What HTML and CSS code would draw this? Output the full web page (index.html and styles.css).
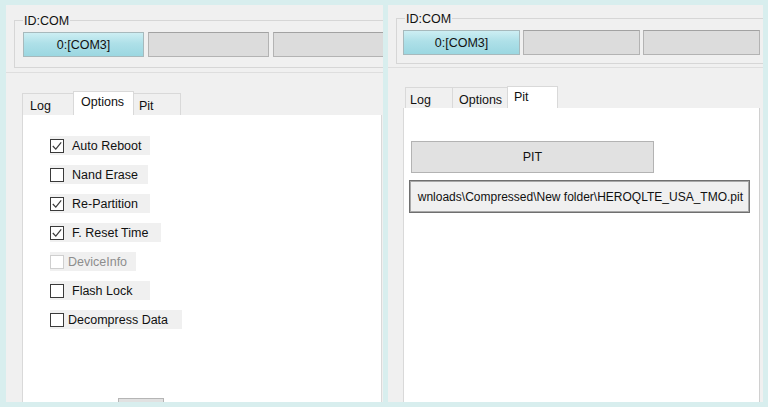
FILE: index.html
```html
<!DOCTYPE html>
<html lang="en">
<head>
<meta charset="utf-8">
<title>Odin</title>
<link rel="stylesheet" href="styles.css">
</head>
<body>
<div class="screen">
  <section class="panel panel-left">
    <div class="top">
      <fieldset class="idcom">
        <legend>ID:COM</legend>
        <div class="slots">
          <div class="slot active">0:[COM3]</div>
          <div class="slot"></div>
          <div class="slot"></div>
        </div>
      </fieldset>
    </div>
    <div class="tabs">
      <div class="tab tab-log">Log</div>
      <div class="tab tab-options selected">Options</div>
      <div class="tab tab-pit">Pit</div>
    </div>
    <div class="tab-body options-body">
      <div class="opt-list">
        <div class="opt w-auto"><span class="cb"><svg viewBox="0 0 12 12"><polyline points="1.8,6 4.8,9.2 10.2,2.4"/></svg></span><span class="opt-text">Auto Reboot</span></div>
        <div class="opt w-nand"><span class="cb"></span><span class="opt-text">Nand Erase</span></div>
        <div class="opt w-repart"><span class="cb"><svg viewBox="0 0 12 12"><polyline points="1.8,6 4.8,9.2 10.2,2.4"/></svg></span><span class="opt-text">Re-Partition</span></div>
        <div class="opt w-reset"><span class="cb"><svg viewBox="0 0 12 12"><polyline points="1.8,6 4.8,9.2 10.2,2.4"/></svg></span><span class="opt-text">F. Reset Time</span></div>
        <div class="opt w-dev disabled"><span class="cb"></span><span class="opt-text tight">DeviceInfo</span></div>
        <div class="opt w-flash"><span class="cb"></span><span class="opt-text">Flash Lock</span></div>
        <div class="opt w-decomp"><span class="cb"></span><span class="opt-text tight">Decompress Data</span></div>
      </div>
      <div class="stub-btn"></div>
    </div>
  </section>

  <section class="panel panel-right">
    <div class="top">
      <fieldset class="idcom">
        <legend>ID:COM</legend>
        <div class="slots">
          <div class="slot active">0:[COM3]</div>
          <div class="slot"></div>
          <div class="slot"></div>
        </div>
      </fieldset>
    </div>
    <div class="tabs">
      <div class="tab tab-log">Log</div>
      <div class="tab tab-options">Options</div>
      <div class="tab tab-pit selected">Pit</div>
    </div>
    <div class="tab-body pit-body">
      <div class="pit-btn">PIT</div>
      <div class="path-box">
        <span class="path-text">wnloads\Compressed\New folder\HEROQLTE_USA_TMO.pit</span>
      </div>
    </div>
  </section>
</div>
</body>
</html>
```

FILE: styles.css
```css
* { box-sizing: border-box; }

html, body { margin: 0; padding: 0; }

body {
  width: 768px;
  height: 407px;
  overflow: hidden;
  background: #d8eeee;
  font-family: "Liberation Sans", Arial, sans-serif;
  font-size: 12.5px;
  color: #111111;
}

.screen {
  display: flex;
  gap: 5px;
  padding: 5px 0 0 6px;
  height: 407px;
}

.panel {
  background: #f0f0f0;
  height: 397px;
  overflow: hidden;
  display: flex;
  flex-direction: column;
}

.panel-left { width: 377px; }
.panel-right { width: 375px; }

/* ---------- top group ---------- */
.top {
  flex: none;
  border-bottom: 1px solid #dedede;
  padding-left: 8px;
}
.panel-left .top { height: 68px; }
.panel-right .top { height: 63px; }

.idcom {
  width: 420px;
  margin: 0;
  border: 1px solid #d6d6d6;
  min-width: 0;
}
.panel-left .idcom { margin-top: 7px; padding: 4px 0 10px 8px; }
.panel-right .idcom { margin-top: 5px; padding: 4px 0 8px 8px; }

.idcom legend {
  padding: 2px 1px 0 1px;
  line-height: 14px;
  font-size: 12.5px;
  color: #111111;
}

.slots { display: flex; }
.panel-right .slots { margin-left: -2px; }

.slot {
  height: 25px;
  flex: none;
  background: #dcdcdc;
  border: 1px solid #b3b3b3;
  border-top-color: #a2a2a2;
  display: flex;
  align-items: center;
  justify-content: center;
}
.panel-left .slot { width: 121px; margin-right: 4px; }
.panel-right .slot { width: 117px; margin-right: 3px; }

.slot.active {
  background: linear-gradient(#cdeef3 0%, #aee0e8 45%, #9bd7e1 100%);
  border-color: #a7b9bc;
}

/* ---------- tabs ---------- */
.tabs {
  flex: none;
  display: flex;
  align-items: flex-end;
  margin-top: 18px;
}
.panel-left .tabs { height: 24px; margin-left: 16px; }
.panel-right .tabs { height: 22px; margin-left: 17px; }

.tab {
  flex: none;
  background: #f0f0f0;
  border: 1px solid #d9d9d9;
  border-bottom: none;
  display: flex;
  align-items: center;
  padding-top: 3px;
}
.panel-left .tab { height: 22px; }
.panel-right .tab { height: 21px; }
.tab + .tab { margin-left: -1px; }

.tab.selected {
  background: #ffffff;
  align-items: flex-start;
  padding-top: 3px;
}
.panel-left .tab.selected { height: 24px; }
.panel-right .tab.selected { height: 22px; }

.panel-left .tab-log { width: 52px; padding-left: 7px; }
.panel-left .tab-options { width: 61px; padding-left: 7px; }
.panel-left .tab-pit { width: 48px; padding-left: 5px; }

.panel-right .tab-log { width: 48px; padding-left: 4px; }
.panel-right .tab-options { width: 56px; padding-left: 6px; }
.panel-right .tab-pit { width: 51px; padding-left: 6px; }

/* ---------- tab body ---------- */
.tab-body {
  flex: 1;
  background: #ffffff;
  border-left: 1px solid #d9d9d9;
  border-right: 1px solid #d9d9d9;
  min-height: 0;
}

.options-body {
  margin: 0 1px 0 16px;
  padding: 21px 0 0 27px;
}

.opt-list {
  display: flex;
  flex-direction: column;
  gap: 10px;
}

.opt {
  height: 19px;
  background: #f0f0f0;
  display: flex;
  align-items: center;
}
.w-auto { width: 100px; }
.w-nand { width: 98px; }
.w-repart { width: 100px; }
.w-reset { width: 111px; }
.w-dev { width: 86px; }
.w-flash { width: 100px; }
.w-decomp { width: 132px; }

.cb {
  flex: none;
  width: 14px;
  height: 14px;
  background: #ffffff;
  border: 1px solid #3a3a3a;
  display: flex;
  align-items: center;
  justify-content: center;
}
.cb svg {
  width: 12px;
  height: 12px;
  fill: none;
  stroke: #3a3a3a;
  stroke-width: 1.2;
}

.opt-text { margin-left: 8px; white-space: nowrap; }
.opt-text.tight { margin-left: 4px; }

.opt.disabled .cb { border-color: #cfcfcf; }
.opt.disabled .opt-text { color: #8d8d8d; }

.stub-btn {
  width: 46px;
  height: 20px;
  margin: 69px 0 0 68px;
  background: #e1e1e1;
  border: 1px solid #b5b5b5;
}

/* ---------- pit tab ---------- */
.pit-body {
  margin: 0 3px 0 15px;
  padding: 33px 0 0 7px;
  border-right-color: #d0d0d0;
}

.pit-btn {
  width: 243px;
  height: 32px;
  background: #e1e1e1;
  border: 1px solid #b3b3b3;
  display: flex;
  align-items: center;
  justify-content: center;
}

.path-box {
  width: 341px;
  height: 33px;
  margin: 7px 0 0 -2px;
  background: #f0f0f0;
  border: 1px solid #6f6f6f;
  box-shadow: inset 0 0 0 1px #a8a8a8;
  display: flex;
  align-items: center;
  justify-content: flex-end;
  padding: 0 6px 0 3px;
  font-size: 12px;
  white-space: nowrap;
}
```
